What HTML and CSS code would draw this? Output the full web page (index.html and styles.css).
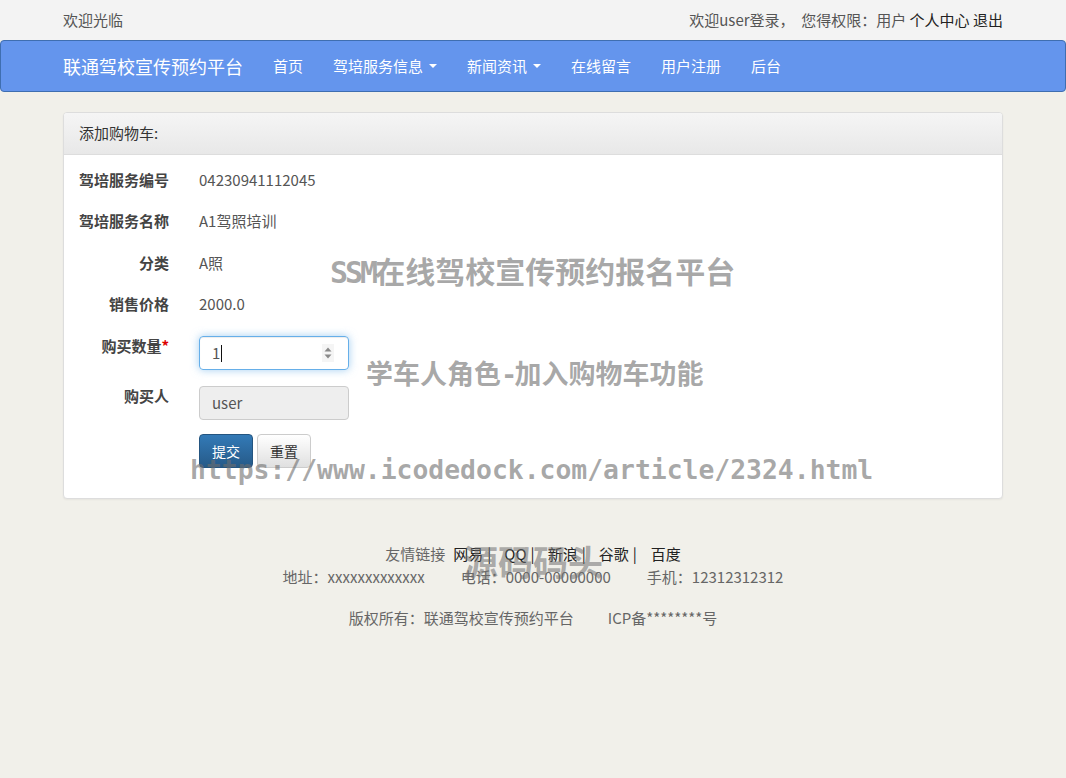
FILE: index.html
```html
<!DOCTYPE html>
<html lang="zh-CN">
<head>
<meta charset="utf-8">
<title>添加购物车</title>
<link rel="stylesheet" href="styles.css">
</head>
<body>
<div class="topbar">
  <div class="container topbar-inner">
    <span>欢迎光临</span>
    <span>欢迎user登录，&nbsp;&nbsp;您得权限：用户 <a class="dark">个人中心</a> <a class="dark">退出</a></span>
  </div>
</div>
<nav class="navbar">
  <div class="container navbar-inner">
    <a class="brand">联通驾校宣传预约平台</a>
    <ul class="nav">
      <li><a>首页</a></li>
      <li><a>驾培服务信息<span class="caret"></span></a></li>
      <li><a>新闻资讯<span class="caret"></span></a></li>
      <li><a>在线留言</a></li>
      <li><a>用户注册</a></li>
      <li><a>后台</a></li>
    </ul>
  </div>
</nav>
<div class="container">
  <div class="panel">
    <div class="panel-heading">添加购物车:</div>
    <div class="panel-body">
      <div class="row r1"><label>驾培服务编号</label><div class="val">04230941112045</div></div>
      <div class="row r2"><label>驾培服务名称</label><div class="val">A1驾照培训</div></div>
      <div class="row r3"><label>分类</label><div class="val">A照</div></div>
      <div class="row r4"><label>销售价格</label><div class="val">2000.0</div></div>
      <div class="row r5"><label>购买数量<span class="req">*</span></label>
        <div class="input focus"><span>1</span><span class="cursor"></span>
          <svg class="spin" width="12" height="18" viewBox="0 0 12 18"><rect x="0" y="0" width="12" height="18" fill="#f5f5f5"/><path d="M2.5 7.5 L6 3.5 L9.5 7.5 Z" fill="#8a8a8a"/><path d="M2.5 10.5 L6 14.5 L9.5 10.5 Z" fill="#8a8a8a"/></svg>
        </div>
      </div>
      <div class="row r6"><label>购买人</label><div class="input readonly">user</div></div>
      <div class="row r7"><label></label>
        <div class="btns"><button class="btn primary">提交</button><button class="btn default">重置</button></div>
      </div>
    </div>
  </div>
</div>
<footer class="footer">
  <p class="links"><span class="lbl">友情链接</span><a>网易</a><span class="sep">|</span><a>QQ</a><span class="sep">|</span><a>新浪</a><span class="sep">|</span><a>谷歌</a><span class="sep">|</span><a class="last">百度</a></p>
  <p class="contact"><span>地址：xxxxxxxxxxxxx</span><span>电话：0000-00000000</span><span>手机：12312312312</span></p>
  <p class="copy"><span>版权所有：联通驾校宣传预约平台</span><span>ICP备********号</span></p>
</footer>
<div class="wm wm1"><span class="lat">SSM</span>在线驾校宣传预约报名平台</div>
<div class="wm wm2">学车人角色<span class="lat">-</span>加入购物车功能</div>
<div class="wm wm3">https://www.icodedock.com/article/2324.html</div>
<div class="wm wm4">源码码头</div>
</body>
</html>
```
FILE: styles.css
```css
* { box-sizing: border-box; }
html, body { margin: 0; padding: 0; }
body {
  background: #f1f0ea;
  font-family: "Noto Sans CJK SC", "Noto Sans", sans-serif;
  font-size: 15px;
  line-height: 20px;
  color: #555;
  min-height: 778px;
  position: relative;
}
a { color: inherit; text-decoration: none; }
.container { width: 940px; margin: 0 auto; }

.topbar { background: #f3f3f3; height: 40px; }
.topbar-inner { height: 40px; display: flex; justify-content: space-between; align-items: center; color: #555; }
.topbar .dark { color: #222; }

.navbar {
  height: 52px;
  background: #6495ed;
  border: 1px solid #3f6eb0;
  border-radius: 4px;
}
.navbar-inner { height: 50px; display: flex; align-items: center; }
.brand { color: #fff; font-size: 18px; line-height: 20px; padding-right: 15px; }
.nav { list-style: none; margin: 0; padding: 0; display: flex; }
.nav a { display: flex; align-items: center; padding: 0 15px; color: #fff; line-height: 50px; }
.caret {
  display: inline-block;
  width: 0; height: 0;
  margin-left: 6px;
  border-top: 4px solid #fff;
  border-left: 4px solid transparent;
  border-right: 4px solid transparent;
}

.panel {
  margin-top: 20px;
  background: #fff;
  border: 1px solid #ddd;
  border-radius: 4px;
  box-shadow: 0 1px 2px rgba(0,0,0,.05);
}
.panel-heading {
  padding: 10px 15px 11px;
  color: #333;
  background: linear-gradient(to bottom, #f5f5f5, #e8e8e8);
  border-bottom: 1px solid #ddd;
  border-radius: 3px 3px 0 0;
}
.panel-body { padding: 15px 15px 15px; }

.row { display: flex; align-items: flex-start; }
.row label { width: 90px; margin-right: 30px; text-align: right; font-weight: bold; color: #444; flex: none; }
.val { color: #555; }
.r1 { margin-bottom: 21px; }
.r2 { margin-bottom: 22px; }
.r3 { margin-bottom: 21px; }
.r4 { margin-bottom: 22px; }
.r5 { margin-bottom: 16px; }
.r6 { margin-bottom: 14px; }
.r7 { margin-bottom: 15px; }
.req { color: #d00; }

.input {
  width: 150px;
  height: 34px;
  padding: 6px 12px;
  border: 1px solid #ccc;
  border-radius: 4px;
  color: #555;
  position: relative;
  display: flex;
  align-items: center;
}
.input.focus {
  border-color: #66afe9;
  box-shadow: inset 0 1px 1px rgba(0,0,0,.075), 0 0 8px rgba(102,175,233,.6);
}
.cursor { display: inline-block; width: 1px; height: 17px; background: #111; margin-left: 1px; }
.spin { position: absolute; right: 14px; top: 7px; }
.input.readonly { background: #eee; }

.btns { display: flex; gap: 4px; }
.btn {
  font: inherit;
  font-size: 14px;
  height: 34px;
  padding: 6px 12px;
  border-radius: 4px;
  line-height: 20px;
}
.btn.primary {
  color: #fff;
  background: linear-gradient(to bottom, #337ab7, #265a88);
  border: 1px solid #245580;
}
.btn.default {
  color: #333;
  background: linear-gradient(to bottom, #fff, #e0e0e0);
  border: 1px solid #ccc;
}

.footer { text-align: center; color: #666; padding-top: 43px; }
.footer p { margin: 0; line-height: 23px; }
.footer a { color: #222; }
.links .lbl { margin-right: 8px; }
.links .sep { color: #222; margin: 0 13px 0 4px; }
.links .last { margin-left: 1px; }
.contact span { margin: 0 18px; }
.copy { margin-top: 18px !important; }
.copy span { margin: 0 17px; }

.wm {
  position: absolute;
  color: rgba(110,110,110,0.6);
  font-weight: bold;
  white-space: nowrap;
  line-height: 1;
}
.wm1 { left: 330px; top: 255px; font-size: 30px; }
.wm1 .lat { letter-spacing: -3px; }
.wm2 { left: 366px; top: 359px; font-size: 27px; }
.wm2 .lat { letter-spacing: -2.8px; }
.wm .lat { font-family: "DejaVu Sans Mono", monospace; }
.wm3 { left: 190px; top: 457px; font-family: "DejaVu Sans Mono", monospace; font-size: 26.4px; }
.wm4 { left: 463px; top: 543px; font-size: 35px; color: rgba(110,110,110,0.55); }
```
